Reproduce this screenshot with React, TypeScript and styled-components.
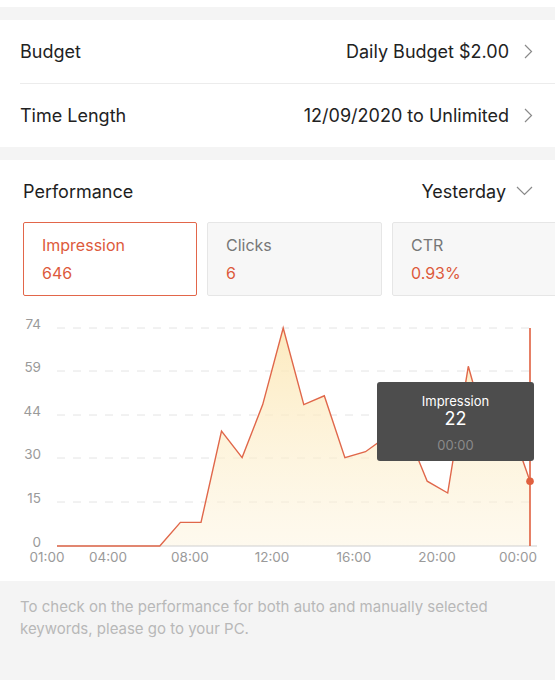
import React from "react";
import styled, { createGlobalStyle } from "styled-components";

const GlobalStyle = createGlobalStyle`
  html, body { margin: 0; padding: 0; background: #f4f4f4; }
  body { font-family: Inter, "Liberation Sans", Arial, sans-serif; -webkit-font-smoothing: antialiased; }
`;

const Page = styled.div`
  width: 555px;
  height: 680px;
  overflow: hidden;
  display: flex;
  flex-direction: column;
  background: #f4f4f4;
`;

const CardEdge = styled.div`
  height: 7px;
  background: #ffffff;
  margin-bottom: 13px;
`;

const Card = styled.section<{ $gapBelow?: number }>`
  background: #ffffff;
  margin-bottom: ${(p) => p.$gapBelow ?? 0}px;
`;

const Row = styled.div<{ $divider?: boolean }>`
  height: 63px;
  margin-left: 20px;
  padding-right: 22px;
  display: flex;
  align-items: center;
  justify-content: space-between;
  border-bottom: ${(p) => (p.$divider ? "1px solid #ececec" : "none")};
  font-size: 18px;
  color: #222;
`;

const RowValue = styled.div`
  display: flex;
  align-items: center;
  gap: 15px;
`;

const Header = styled.div`
  height: 62px;
  padding: 0 22px 0 23px;
  display: flex;
  align-items: center;
  justify-content: space-between;
  font-size: 18px;
  color: #1e1e1e;
`;

const Dropdown = styled.div`
  display: flex;
  align-items: center;
  gap: 10px;
`;

const Metrics = styled.div`
  display: grid;
  grid-template-columns: 174px 175px 175px;
  gap: 10px;
  padding-left: 23px;
  overflow: hidden;
`;

const Metric = styled.div<{ $active?: boolean }>`
  height: 74px;
  box-sizing: border-box;
  border: 1px solid ${(p) => (p.$active ? "#e2664a" : "#e6e6e6")};
  background: ${(p) => (p.$active ? "#ffffff" : "#f7f7f7")};
  border-radius: 2px;
  padding: 12px 0 0 18px;
  display: flex;
  flex-direction: column;
  gap: 8px;
  font-size: 16px;
`;

const MetricLabel = styled.div<{ $active?: boolean }>`
  color: ${(p) => (p.$active ? "#dd5a3c" : "#777")};
  line-height: 20px;
`;

const MetricValue = styled.div`
  color: #dd5a3c;
  line-height: 20px;
`;

const ChartWrap = styled.div`
  position: relative;
  margin-top: 13px;
  height: 272px;
`;

const Tooltip = styled.div`
  position: absolute;
  left: 377px;
  top: 73px;
  width: 157px;
  height: 79px;
  box-sizing: border-box;
  background: #4d4d4d;
  border-radius: 3px;
  display: flex;
  flex-direction: column;
  align-items: center;
  padding-top: 11px;
  color: #fff;
`;

const TipTitle = styled.div`
  font-size: 13px;
  line-height: 16px;
`;

const TipValue = styled.div`
  font-size: 18px;
  line-height: 20px;
`;

const TipTime = styled.div`
  font-size: 13px;
  line-height: 16px;
  color: #8a8a8a;
  margin-top: 8px;
`;

const Footer = styled.p`
  margin: 0;
  padding: 15px 20px;
  font-size: 15px;
  line-height: 22px;
  color: #b8b8b8;
`;

const Chevron = () => (
  <svg width="9" height="15" viewBox="0 0 9 15">
    <path d="M1 1 L7.5 7.5 L1 14" fill="none" stroke="#8a8a8a" strokeWidth="1.2" />
  </svg>
);

const ChevronDown = () => (
  <svg width="17" height="10" viewBox="0 0 17 10">
    <path d="M1 1 L8.5 8.5 L16 1" fill="none" stroke="#8a8a8a" strokeWidth="1.2" />
  </svg>
);

const data = [0, 0, 0, 0, 0, 0, 8, 8, 39, 30, 48, 74, 48, 51, 30, 32, 37, 39, 22, 18, 61, 36, 42, 22];
const X0 = 57;
const STEP = (530 - 57) / 23;
const BASE = 237;
const TOP = 19;
const SCALE = (BASE - TOP) / 74;
const gridY = [19, 62, 106, 149, 193];
const yLabels = [
  { v: "74", y: 19 },
  { v: "59", y: 62 },
  { v: "44", y: 106 },
  { v: "30", y: 149 },
  { v: "15", y: 193 },
  { v: "0", y: 237 },
];
const xLabels = [
  { t: "01:00", x: 47 },
  { t: "04:00", x: 108 },
  { t: "08:00", x: 190 },
  { t: "12:00", x: 272 },
  { t: "16:00", x: 354 },
  { t: "20:00", x: 437 },
  { t: "00:00", x: 518 },
];

const FONT = "Inter, Liberation Sans, Arial, sans-serif";

const Chart = () => {
  const pts = data.map((v, i) => [X0 + i * STEP, BASE - v * SCALE]);
  const line = pts.map((p, i) => `${i ? "L" : "M"}${p[0].toFixed(1)} ${p[1].toFixed(1)}`).join(" ");
  const area = `${line} L530 ${BASE} L${X0} ${BASE} Z`;
  const last = pts[pts.length - 1];
  return (
    <svg width="555" height="272" viewBox="0 0 555 272" style={{ display: "block" }}>
      <defs>
        <linearGradient id="fill" x1="0" y1="0" x2="0" y2="1">
          <stop offset="0%" stopColor="#fce7b4" stopOpacity="0.85" />
          <stop offset="100%" stopColor="#fdf3da" stopOpacity="0.45" />
        </linearGradient>
      </defs>
      {gridY.map((y) => (
        <line key={y} x1="57" x2="537" y1={y} y2={y} stroke="#e4e4e4" strokeWidth="1" strokeDasharray="8 8" />
      ))}
      <path d={area} fill="url(#fill)" />
      <line x1="57" x2="537" y1={BASE} y2={BASE} stroke="#cfcfcf" strokeWidth="1.2" />
      <path d={line} fill="none" stroke="#e0674a" strokeWidth="1.4" strokeLinejoin="miter" />
      <line x1="530" x2="530" y1={TOP} y2={BASE} stroke="#e0603f" strokeWidth="1.6" />
      <circle cx={last[0]} cy={last[1]} r="3.8" fill="#e0603f" />
      {yLabels.map((l) => (
        <text key={l.v} x="41" y={l.y + 1} textAnchor="end" fontSize="13.5" fill="#9a9a9a" fontFamily={FONT}>
          {l.v}
        </text>
      ))}
      {xLabels.map((l) => (
        <text key={l.t} x={l.x} y="253" textAnchor="middle" fontSize="13.5" fill="#9a9a9a" fontFamily={FONT}>
          {l.t}
        </text>
      ))}
    </svg>
  );
};

export default function App() {
  return (
    <Page>
      <GlobalStyle />
      <CardEdge />
      <Card $gapBelow={13}>
        <Row $divider>
          <span>Budget</span>
          <RowValue>
            <span>Daily Budget $2.00</span>
            <Chevron />
          </RowValue>
        </Row>
        <Row>
          <span>Time Length</span>
          <RowValue>
            <span>12/09/2020 to Unlimited</span>
            <Chevron />
          </RowValue>
        </Row>
      </Card>
      <Card>
        <Header>
          <span>Performance</span>
          <Dropdown>
            <span>Yesterday</span>
            <ChevronDown />
          </Dropdown>
        </Header>
        <Metrics>
          <Metric $active>
            <MetricLabel $active>Impression</MetricLabel>
            <MetricValue>646</MetricValue>
          </Metric>
          <Metric>
            <MetricLabel>Clicks</MetricLabel>
            <MetricValue>6</MetricValue>
          </Metric>
          <Metric>
            <MetricLabel>CTR</MetricLabel>
            <MetricValue>0.93%</MetricValue>
          </Metric>
        </Metrics>
        <ChartWrap>
          <Chart />
          <Tooltip>
            <TipTitle>Impression</TipTitle>
            <TipValue>22</TipValue>
            <TipTime>00:00</TipTime>
          </Tooltip>
        </ChartWrap>
      </Card>
      <Footer>
        To check on the performance for both auto and manually selected keywords, please go to your PC.
      </Footer>
    </Page>
  );
}
